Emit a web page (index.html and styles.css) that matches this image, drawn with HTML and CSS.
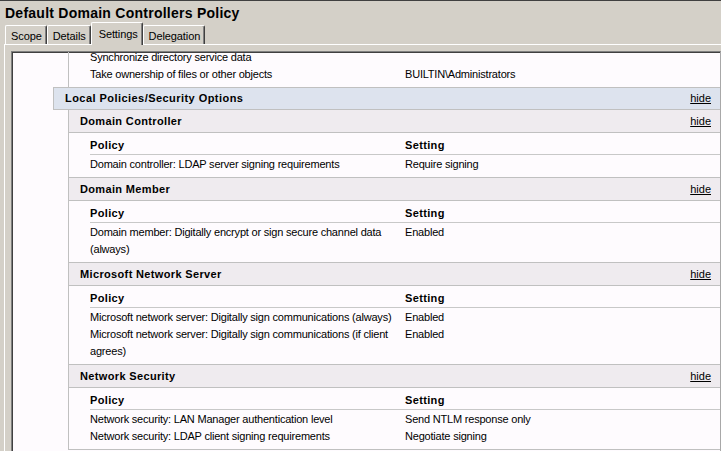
FILE: index.html
```html
<!DOCTYPE html>
<html>
<head>
<meta charset="utf-8">
<title>Default Domain Controllers Policy</title>
<link rel="stylesheet" href="styles.css">
</head>
<body>
<div class="window">
  <div class="title">Default Domain Controllers Policy</div>
  <div class="tabs">
    <div class="tab">Scope</div>
    <div class="tab">Details</div>
    <div class="tab active">Settings</div>
    <div class="tab">Delegation</div>
  </div>
  <div class="panel">
    <div class="view">
      <div class="block prev">
        <div class="rows">
          <div class="row"><span>Synchronize directory service data</span><span></span></div>
          <div class="row"><span>Take ownership of files or other objects</span><span>BUILTIN\Administrators</span></div>
        </div>
      </div>
      <div class="section">
        <div class="section-head"><span>Local Policies/Security Options</span><a class="hide">hide</a></div>
        <div class="block">
          <div class="group">
            <div class="group-head"><span>Domain Controller</span><a class="hide">hide</a></div>
            <div class="group-body">
              <div class="row thead"><span>Policy</span><span>Setting</span></div>
              <div class="row"><span>Domain controller: LDAP server signing requirements</span><span>Require signing</span></div>
            </div>
          </div>
          <div class="group">
            <div class="group-head"><span>Domain Member</span><a class="hide">hide</a></div>
            <div class="group-body">
              <div class="row thead"><span>Policy</span><span>Setting</span></div>
              <div class="row"><span>Domain member: Digitally encrypt or sign secure channel data<br>(always)</span><span>Enabled</span></div>
            </div>
          </div>
          <div class="group">
            <div class="group-head"><span>Microsoft Network Server</span><a class="hide">hide</a></div>
            <div class="group-body">
              <div class="row thead"><span>Policy</span><span>Setting</span></div>
              <div class="row"><span>Microsoft network server: Digitally sign communications (always)</span><span>Enabled</span></div>
              <div class="row"><span>Microsoft network server: Digitally sign communications (if client<br>agrees)</span><span>Enabled</span></div>
            </div>
          </div>
          <div class="group">
            <div class="group-head"><span>Network Security</span><a class="hide">hide</a></div>
            <div class="group-body">
              <div class="row thead"><span>Policy</span><span>Setting</span></div>
              <div class="row"><span>Network security: LAN Manager authentication level</span><span>Send NTLM response only</span></div>
              <div class="row"><span>Network security: LDAP client signing requirements</span><span>Negotiate signing</span></div>
            </div>
          </div>
        </div>
      </div>
    </div>
  </div>
</div>
</body>
</html>
```
FILE: styles.css
```css
html, body {
  margin: 0;
  padding: 0;
  height: 451px;
  overflow: hidden;
}
body {
  background: #d4d0c8;
  font-family: "Liberation Sans", Arial, sans-serif;
  font-size: 11px;
  color: #000;
}
.window {
  height: 451px;
  box-sizing: border-box;
  border-top: 1px solid #404040;
  display: flex;
  flex-direction: column;
}
.title {
  height: 18px;
  padding: 4px 0 0 5px;
  line-height: 16px;
  font-size: 14px;
  font-weight: bold;
  letter-spacing: 0.25px;
}
.tabs {
  height: 21px;
  display: flex;
  align-items: flex-end;
  padding-left: 5px;
  position: relative;
  z-index: 1;
}
.tab {
  box-sizing: border-box;
  height: 19px;
  padding: 2px 4px 0 5px;
  line-height: 16px;
  border-top: 1px solid #fff;
  border-left: 1px solid #fff;
  border-right: 1px solid #404040;
  box-shadow: inset -1px 0 0 #808080;
  border-radius: 2px 2px 0 0;
  letter-spacing: -0.1px;
  background: #d4d0c8;
}
.tab.active {
  height: 23px;
  margin-bottom: -1px;
  padding: 3px 4px 0 7px;
}
.panel {
  flex: 1;
  display: flex;
  margin-left: 4px;
  border-top: 1px solid #fff;
  border-left: 1px solid #fff;
  padding: 6px 0 0 6px;
  min-height: 0;
}
.view {
  flex: 1;
  background: #fefbfe;
  border-top: 1px solid #808080;
  border-left: 1px solid #808080;
  border-right: 1px solid #a8a8a8;
  box-shadow: inset 1px 1px 0 #404040;
  overflow: hidden;
  letter-spacing: -0.2px;
}
.block {
  border-left: 1px solid #c0c0c0;
  margin-left: 15px;
}
.block.prev {
  margin-left: 56px;
}
.rows {
  margin-top: -4px;
  padding: 0 0 5px 21px;
}
.row {
  display: grid;
  grid-template-columns: 315px 1fr;
  line-height: 17px;
}
.row > span {
  position: relative;
  top: 1px;
}
.section {
  margin-left: 41px;
}
.section-head {
  height: 21px;
  line-height: 21px;
  display: flex;
  justify-content: space-between;
  padding: 0 9px 0 11px;
  border-top: 1px solid #c0c0c0;
  border-bottom: 1px solid #c0c0c0;
  border-left: 1px solid #c0c0c0;
  background: #dde3ee;
  font-weight: bold;
  letter-spacing: 0.45px;
}
.group-head {
  height: 22px;
  line-height: 22px;
  display: flex;
  justify-content: space-between;
  padding: 0 9px 0 11px;
  border-bottom: 1px solid #c0c0c0;
  background: #efebef;
  font-weight: bold;
  letter-spacing: 0.35px;
}
.hide {
  font-weight: normal;
  text-decoration: underline;
  color: #000;
  letter-spacing: 0;
}
.group-body {
  padding: 3px 0 5px 21px;
  border-bottom: 1px solid #c0c0c0;
}
.row.thead {
  height: 18px;
  line-height: 18px;
  border-bottom: 1px solid #c8c8c8;
  font-weight: bold;
  letter-spacing: 0.35px;
}
.row.thead > span {
  top: 0;
}
```
